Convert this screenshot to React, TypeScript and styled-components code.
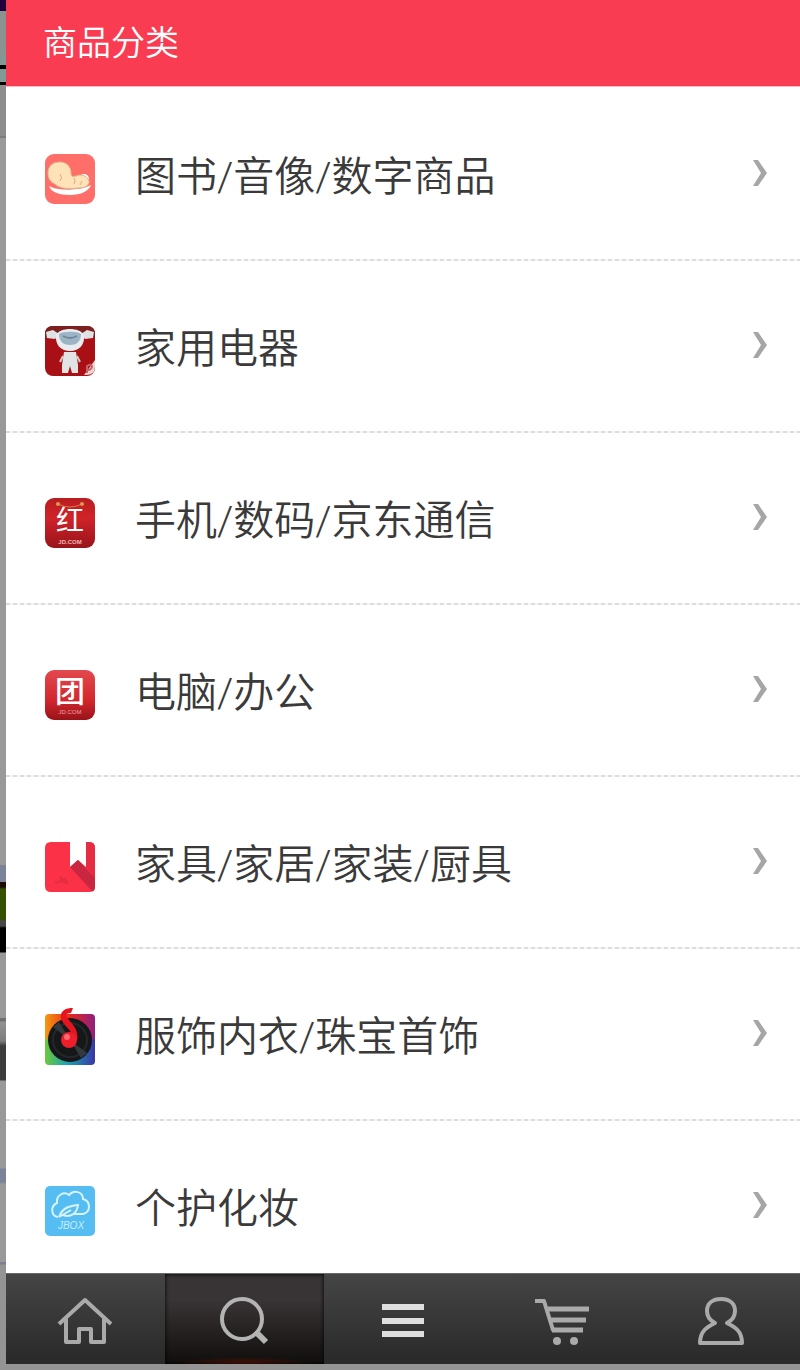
import * as React from 'react'
import styled, { createGlobalStyle } from 'styled-components'

const GlobalStyle = createGlobalStyle`
  * {
    box-sizing: border-box;
  }
  body {
    margin: 0;
    font-family: Roboto, "Noto Sans CJK SC", sans-serif;
  }
`

// the dimmed page stays visible as a thin edge left of the panel
const Page = styled.div`
  height: 100vh;
  display: flex;
  flex-flow: column;
  padding: 0 0 6px 6px;
  background-color: #949494;
  background-image: linear-gradient(
    #22003c 11px, #8b9391 11px 50px, #7f9a97 65px, #000 65px 69px,
    #7f9a97 69px 82px, #000 82px 85px, #8c8e8d 85px 136px, #7c7c7c 136px 138px,
    #999 138px 865px, #7a8398 865px 882px, #1c0c08 882px 887px, #355000 889px 919px,
    #484848 921px 926px, #000 928px 952px, #999 953px 1018px, #707070 1018px 1021px,
    #929292 1022px, #7c7c7c 1041px, #3c3c3c 1046px 1080px, #999 1081px 1168px,
    #7a8398 1169px 1182px, #999 1184px 1262px, #7d808c 1262px 1264px, #949494 1265px
  );
  background-repeat: no-repeat;
  background-size: 6px 100%;
`

const Header = styled.header`
  flex: none;
  height: 87px;
  padding-left: 37px;
  display: flex;
  align-items: center;
  background-color: #fa3c52;
  border-bottom: 1px solid #fdb9c1;
`

const Title = styled.h1`
  margin: 0;
  font-size: 34px;
  line-height: 48px;
  font-weight: 350;
  color: #fff;
`

const List = styled.ul`
  flex: 1;
  min-height: 0;
  overflow: hidden;
  margin: 0;
  padding: 2px 0 0;
  list-style: none;
  background-color: #fff;
`

const Row = styled.li`
  height: 172px;
  background: repeating-linear-gradient(90deg, #dcdcdc 0 4px, #f6f6f6 4px 7px) bottom / 100% 2px no-repeat;
`

const RowLink = styled.a`
  height: 100%;
  padding: 6px 32px 0 39px;
  display: flex;
  align-items: center;
  color: #3a3a3a;
  text-decoration: none;
`

const IconBox = styled.span`
  flex: none;
  width: 50px;
  height: 50px;
  margin: 2px 40px 0 0;

  svg {
    display: block;
    overflow: visible;
  }
`

const Label = styled.span`
  flex: 1;
  font-size: 41px;
  line-height: 60px;
  font-weight: 350;
  padding-bottom: 2px;
`

const Arrow = styled.svg`
  flex: none;
  margin-bottom: 10px;
`

const Nav = styled.nav`
  flex: none;
  height: 91px;
  display: grid;
  grid-template-columns: repeat(5, 1fr);
  background: linear-gradient(#454545, #292929);
  border-top: 1px solid #6a6a6a;
`

const Tab = styled.button<{ $active?: boolean }>`
  display: flex;
  align-items: center;
  justify-content: center;
  padding: 4px 0 0;
  border: 0;
  background: ${p => p.$active
    ? 'radial-gradient(ellipse 70px 7px at 50% 100%, #571408, transparent), linear-gradient(#383334 30%, #100e0c)'
    : 'none'};
  box-shadow: ${p => p.$active ? 'inset 0 0 4px #000' : 'none'};
`

const Glyph = styled.text`
  font-family: "Liberation Sans", "Noto Sans CJK SC", sans-serif;
`

const BabyIcon = () => (
  <svg width="50" height="50" viewBox="0 0 50 50">
    <rect width="50" height="50" rx="9" fill="#ff6e69" />
    <path d="M4 32C12 37 36 37 46 31C44 37 36 41 25 41C14 41 6 38 4 32Z" fill="#fff" />
    <circle cx="39" cy="25" r="5" fill="#fff" />
    <path d="M3 19C3 11 9 8 15 8C22 8 26 13 26 19C26 22 27 23 31 22C35 20 42 21 44 27C45 31 40 34 34 34C24 35 15 35 10 30C5 28 3 24 3 19Z" fill="#ffe2b8" stroke="#dcb88c" />
    <path d="M15 20Q18 24 15 27M29 30Q31 26 29 24M37 27L35 31" fill="none" stroke="#d9ad7c" />
  </svg>
)

const RobotIcon = () => (
  <svg width="50" height="50" viewBox="0 0 50 50">
    <rect width="50" height="50" rx="8" fill="#a91016" />
    <path d="M0 8Q0 0 8 0H42Q50 0 50 8V12H0Z" fill="#7d2020" />
    <path d="M1 6L8 4L14 8L10 13L2 12ZM49 6L42 4L36 8L40 13L48 12Z" fill="#dfe2e3" />
    <path d="M11 9C15 1 35 1 39 9C40 18 35 25 25 25C15 25 10 18 11 9Z" fill="#e8ecee" />
    <path d="M14 8C18 5 32 5 36 8C36 16 31 19 25 19C19 19 14 16 14 8Z" fill="#9db4c6" />
    <path d="M18 10Q25 14 32 10" fill="none" stroke="#71889a" strokeWidth="2" />
    <path d="M19 26H31L33 39V47H27L25 40L23 47H17V39Z" fill="#e2e3e4" />
    <path d="M18 30L15 36M32 30L35 36" stroke="#d8c8c8" strokeWidth="2" />
    <path d="M50 34L39 49Q50 50 50 41Z" fill="#ead4d4" />
    <path d="M42 47V40Q47 37 47 41Q46 44 43 44" fill="none" stroke="#c8626a" strokeWidth="2" />
  </svg>
)

const HongIcon = () => (
  <svg width="50" height="50" viewBox="0 0 50 50">
    <defs>
      <linearGradient id="hong" x2="0" y2="1">
        <stop stopColor="#b81d1f" />
        <stop offset=".4" stopColor="#d0232a" />
        <stop offset="1" stopColor="#98141a" />
      </linearGradient>
    </defs>
    <rect width="50" height="50" rx="9" fill="url(#hong)" />
    <path d="M13 6Q25 12 37 6" fill="none" stroke="#d97a45" />
    <circle cx="13" cy="6" r="2" fill="#e09a50" />
    <circle cx="37" cy="6" r="2" fill="#e09a50" />
    <Glyph x="25" y="33" textAnchor="middle" fontSize="28" fill="#fff">红</Glyph>
    <Glyph x="25" y="46" textAnchor="middle" fontSize="6" fontWeight="700" fill="#f0b4b4">JD.COM</Glyph>
  </svg>
)

const TuanIcon = () => (
  <svg width="50" height="50" viewBox="0 0 50 50">
    <defs>
      <linearGradient id="tuan" x2="0" y2="1">
        <stop stopColor="#e2494f" />
        <stop offset=".6" stopColor="#d3272e" />
        <stop offset="1" stopColor="#981319" />
      </linearGradient>
    </defs>
    <rect width="50" height="50" rx="9" fill="url(#tuan)" />
    <Glyph x="25" y="32" textAnchor="middle" fontSize="30" fontWeight="500" fill="#fff">团</Glyph>
    <Glyph x="25" y="44" textAnchor="middle" fontSize="6" fill="#f0a0a0">JD.COM</Glyph>
  </svg>
)

const BookIcon = () => (
  <svg width="50" height="50" viewBox="0 0 50 50">
    <path d="M6 0H25V25L33 18L41 25V0H44Q50 0 50 6V44Q50 50 44 50H6Q0 50 0 44V6Q0 0 6 0Z" fill="#fb3148" />
    <path d="M25 25L33 18L50 36V44Q50 50 47 49Z" fill="#c92740" />
    <path d="M41 0H44Q50 0 50 6V36L41 25Z" fill="#e52c43" />
    <path d="M10 40Q17 42 16 34M16 39Q20 34 22 41Z" fill="none" stroke="#e52c43" strokeWidth="2" />
  </svg>
)

const MusicIcon = () => (
  <svg width="50" height="50" viewBox="0 0 50 50">
    <defs>
      <linearGradient id="warm" x2="1">
        <stop stopColor="#f59a10" />
        <stop offset=".5" stopColor="#e8261c" />
        <stop offset="1" stopColor="#8d2080" />
      </linearGradient>
      <linearGradient id="cold" x2="1">
        <stop stopColor="#6fc83a" />
        <stop offset=".45" stopColor="#18a4b4" />
        <stop offset="1" stopColor="#3b36a4" />
      </linearGradient>
    </defs>
    <path d="M0 25V4Q0 0 4 0H46Q50 0 50 4V25Z" fill="url(#warm)" />
    <path d="M0 25V47Q0 51 4 51H46Q50 51 50 47V25Z" fill="url(#cold)" />
    <circle cx="25" cy="26" r="22" fill="#151719" />
    <circle cx="25" cy="26" r="17" fill="none" stroke="#24282b" strokeWidth="2" />
    <path d="M25 26L8 13L14 8ZM25 26L42 39L36 44Z" fill="#34393d" />
    <path d="M27 24C29 17 17 11 16 4C15 -3 20 -6 28 -6L26 -1C21 -1 20 1 24 6C29 12 34 17 32 27Z" fill="#e5141f" />
    <circle cx="24" cy="26" r="8" fill="#ef1e2b" />
    <circle cx="22" cy="23" r="3" fill="#ff6a70" />
  </svg>
)

const CloudIcon = () => (
  <svg width="50" height="50" viewBox="0 0 50 50">
    <rect width="50" height="50" rx="5" fill="#55bdf2" />
    <path d="M13 31C6 30 5 20 12 17C11 9 19 5 24 9C29 3 38 6 38 13C46 15 46 26 38 28H29" fill="none" stroke="#d8f3ff" strokeWidth="2" />
    <path d="M14 31C17 22 24 20 33 19C32 27 26 32 18 29M14 31L26 24" fill="none" stroke="#d8f3ff" strokeWidth="2" />
    <Glyph x="26" y="43" textAnchor="middle" fontSize="10" fontStyle="italic" fill="#c8edff">JBOX</Glyph>
  </svg>
)

const categories = [
  { name: '图书/音像/数字商品', icon: <BabyIcon /> },
  { name: '家用电器', icon: <RobotIcon /> },
  { name: '手机/数码/京东通信', icon: <HongIcon /> },
  { name: '电脑/办公', icon: <TuanIcon /> },
  { name: '家具/家居/家装/厨具', icon: <BookIcon /> },
  { name: '服饰内衣/珠宝首饰', icon: <MusicIcon /> },
  { name: '个护化妆', icon: <CloudIcon /> },
]

const tabs = [
  {
    name: '首页',
    icon: (
      <svg width="56" height="50" viewBox="0 0 56 50" fill="none" stroke="#aaa" strokeWidth="4">
        <path d="M2 28L28 4L54 28M9 23V46H22V33H34V46H47V23" strokeLinejoin="round" />
      </svg>
    ),
  },
  {
    name: '搜索',
    icon: (
      <svg width="50" height="50" viewBox="0 0 50 50" fill="none" stroke="#b4b4b4">
        <circle cx="23" cy="23" r="20" strokeWidth="4" />
        <path d="M36 36L39 39" strokeWidth="4" />
        <path d="M38 37L47 46" strokeWidth="6" />
      </svg>
    ),
  },
  {
    name: '分类',
    icon: (
      <svg width="44" height="50" viewBox="0 0 44 50" stroke="#dedede" strokeWidth="6">
        <path d="M1 11H43M1 25H43M1 38H43" />
      </svg>
    ),
  },
  {
    name: '购物车',
    icon: (
      <svg width="56" height="50" viewBox="0 0 56 50" fill="none" stroke="#aaa" strokeWidth="5">
        <path d="M1 5H10L19 34H49" strokeWidth="4" strokeLinejoin="round" />
        <path d="M14 13H55M16 24H52M18 34H49" />
        <circle cx="23" cy="45" r="4" fill="#aaa" stroke="none" />
        <circle cx="40" cy="45" r="4" fill="#aaa" stroke="none" />
      </svg>
    ),
  },
  {
    name: '我的',
    icon: (
      <svg width="46" height="50" viewBox="0 0 46 50" fill="none" stroke="#aaa" strokeWidth="4">
        <path d="M17 27C11 24 9 19 9 15C9 7 15 3 23 3C31 3 37 7 37 15C37 19 35 24 29 27C37 31 44 35 44 47H2C2 35 9 31 17 27Z" strokeLinejoin="round" />
      </svg>
    ),
  },
]

const App: React.FC = () => {
  const [active, setActive] = React.useState(1)

  return (
    <>
      <GlobalStyle />
      <Page>
        <Header>
          <Title>商品分类</Title>
        </Header>
        <List>
          {categories.map(category => (
            <Row key={category.name}>
              <RowLink href="#">
                <IconBox aria-hidden="true">{category.icon}</IconBox>
                <Label>{category.name}</Label>
                <Arrow width="16" height="28" viewBox="0 0 16 28" aria-hidden="true">
                  <path d="M1 1H6L15 14L6 27H1L9 14Z" fill="#a6a6a6" />
                </Arrow>
              </RowLink>
            </Row>
          ))}
        </List>
        <Nav>
          {tabs.map((tab, i) => (
            <Tab key={tab.name} $active={i === active} aria-label={tab.name} onClick={() => setActive(i)}>
              {tab.icon}
            </Tab>
          ))}
        </Nav>
      </Page>
    </>
  )
}

export default App
